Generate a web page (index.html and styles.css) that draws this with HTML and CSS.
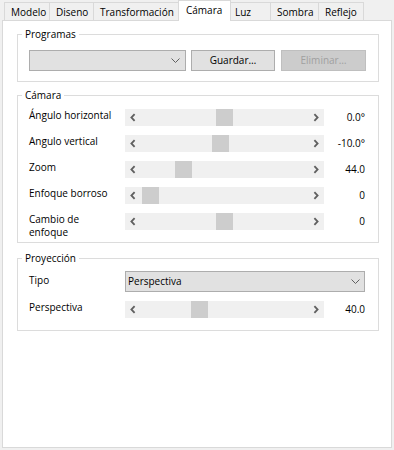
FILE: index.html
```html
<!DOCTYPE html>
<html lang="es">
<head>
<meta charset="utf-8">
<title>Cámara</title>
<link rel="stylesheet" href="styles.css">
</head>
<body>
<div class="window">
  <div class="tabs">
    <div class="tab t-modelo">Modelo</div>
    <div class="tab t-diseno">Diseno</div>
    <div class="tab t-transf">Transformación</div>
    <div class="tab t-camara selected">Cámara</div>
    <div class="tab t-luz">Luz</div>
    <div class="tab t-sombra">Sombra</div>
    <div class="tab t-reflejo">Reflejo</div>
  </div>
  <div class="pane">
    <div class="group g-prog">
      <span class="legend">Programas</span>
      <div class="prog-row">
        <div class="combo c-prog">
          <span class="combo-text"></span>
          <svg class="chev" width="9" height="5" viewBox="0 0 9 5"><polyline points="0.5,0.5 4.5,4.5 8.5,0.5" fill="none" stroke="#606060" stroke-width="1"/></svg>
        </div>
        <div class="btn b-guardar">Guardar…</div>
        <div class="btn b-eliminar disabled">Eliminar…</div>
      </div>
    </div>

    <div class="group g-cam">
      <span class="legend">Cámara</span>
      <div class="grid">
        <div class="lbl">Ángulo horizontal</div>
        <div class="sb">
          <svg class="arr" width="17" height="17" viewBox="0 0 17 17"><polyline points="9.6,5.2 6.4,8.5 9.6,11.8" fill="none" stroke="#606060" stroke-width="1.8"/></svg>
          <div class="track"><div class="thumb" style="margin-left:74px"></div></div>
          <svg class="arr" width="17" height="17" viewBox="0 0 17 17"><polyline points="7.4,5.2 10.6,8.5 7.4,11.8" fill="none" stroke="#606060" stroke-width="1.8"/></svg>
        </div>
        <div class="val">0.0°</div>

        <div class="lbl">Angulo vertical</div>
        <div class="sb">
          <svg class="arr" width="17" height="17" viewBox="0 0 17 17"><polyline points="9.6,5.2 6.4,8.5 9.6,11.8" fill="none" stroke="#606060" stroke-width="1.8"/></svg>
          <div class="track"><div class="thumb" style="margin-left:70px"></div></div>
          <svg class="arr" width="17" height="17" viewBox="0 0 17 17"><polyline points="7.4,5.2 10.6,8.5 7.4,11.8" fill="none" stroke="#606060" stroke-width="1.8"/></svg>
        </div>
        <div class="val">-10.0°</div>

        <div class="lbl">Zoom</div>
        <div class="sb">
          <svg class="arr" width="17" height="17" viewBox="0 0 17 17"><polyline points="9.6,5.2 6.4,8.5 9.6,11.8" fill="none" stroke="#606060" stroke-width="1.8"/></svg>
          <div class="track"><div class="thumb" style="margin-left:33px"></div></div>
          <svg class="arr" width="17" height="17" viewBox="0 0 17 17"><polyline points="7.4,5.2 10.6,8.5 7.4,11.8" fill="none" stroke="#606060" stroke-width="1.8"/></svg>
        </div>
        <div class="val">44.0</div>

        <div class="lbl">Enfoque borroso</div>
        <div class="sb">
          <svg class="arr" width="17" height="17" viewBox="0 0 17 17"><polyline points="9.6,5.2 6.4,8.5 9.6,11.8" fill="none" stroke="#606060" stroke-width="1.8"/></svg>
          <div class="track"><div class="thumb" style="margin-left:0px"></div></div>
          <svg class="arr" width="17" height="17" viewBox="0 0 17 17"><polyline points="7.4,5.2 10.6,8.5 7.4,11.8" fill="none" stroke="#606060" stroke-width="1.8"/></svg>
        </div>
        <div class="val">0</div>

        <div class="lbl">Cambio de<br>enfoque</div>
        <div class="sb">
          <svg class="arr" width="17" height="17" viewBox="0 0 17 17"><polyline points="9.6,5.2 6.4,8.5 9.6,11.8" fill="none" stroke="#606060" stroke-width="1.8"/></svg>
          <div class="track"><div class="thumb" style="margin-left:74px"></div></div>
          <svg class="arr" width="17" height="17" viewBox="0 0 17 17"><polyline points="7.4,5.2 10.6,8.5 7.4,11.8" fill="none" stroke="#606060" stroke-width="1.8"/></svg>
        </div>
        <div class="val">0</div>
      </div>
    </div>

    <div class="group g-proj">
      <span class="legend">Proyección</span>
      <div class="grid grid-proj">
        <div class="lbl lbl-tipo">Tipo</div>
        <div class="combo c-tipo">
          <span class="combo-text">Perspectiva</span>
          <svg class="chev" width="9" height="5" viewBox="0 0 9 5"><polyline points="0.5,0.5 4.5,4.5 8.5,0.5" fill="none" stroke="#606060" stroke-width="1"/></svg>
        </div>

        <div class="lbl">Perspectiva</div>
        <div class="sb">
          <svg class="arr" width="17" height="17" viewBox="0 0 17 17"><polyline points="9.6,5.2 6.4,8.5 9.6,11.8" fill="none" stroke="#606060" stroke-width="1.8"/></svg>
          <div class="track"><div class="thumb" style="margin-left:49px"></div></div>
          <svg class="arr" width="17" height="17" viewBox="0 0 17 17"><polyline points="7.4,5.2 10.6,8.5 7.4,11.8" fill="none" stroke="#606060" stroke-width="1.8"/></svg>
        </div>
        <div class="val">40.0</div>
      </div>
    </div>
  </div>
</div>
</body>
</html>
```
FILE: styles.css
```css
* { box-sizing: border-box; }

html, body {
  margin: 0;
  padding: 0;
  background: #f0f0f0;
}

body {
  font-family: "Open Sans", "Noto Sans", sans-serif;
  font-size: 10px;
  color: #000;
}

.window {
  width: 394px;
  height: 450px;
  display: flex;
  flex-direction: column;
}

/* Tabs */
.tabs {
  height: 20px;
  display: flex;
  align-items: flex-end;
  padding-left: 4px;
}

.tab {
  height: 18px;
  border: 1px solid #d9d9d9;
  border-bottom: none;
  background: #f0f0f0;
  line-height: 16px;
  padding-top: 1px;
  padding-left: 6px;
  white-space: nowrap;
  margin-left: -1px;
}

.tab:first-child { margin-left: 0; }

.tab.selected {
  height: 21px;
  margin-bottom: -1px;
  background: #fff;
  position: relative;
  z-index: 1;
  padding-left: 7px;
}

.t-modelo { width: 46px; }
.t-diseno { width: 45px; }
.t-transf { width: 86px; }
.t-camara { width: 53px; }
.t-luz { width: 41px; padding-left: 4px; }
.t-sombra { width: 49px; }
.t-reflejo { width: 46px; }

/* Pane */
.pane {
  flex: 1;
  margin: 0 2px 2px 2px;
  border: 1px solid #d9d9d9;
  background: #fff;
  display: flex;
  flex-direction: column;
}

.group {
  position: relative;
  border: 1px solid #dcdcdc;
  margin-left: 14px;
  margin-right: 12px;
  padding-left: 11px;
  padding-right: 12px;
}

.legend {
  position: absolute;
  top: -8px;
  left: 4px;
  line-height: 15px;
  padding: 0 3px;
  background: #fff;
  white-space: nowrap;
}

.g-prog {
  margin-top: 13px;
  padding-top: 15px;
  padding-bottom: 10px;
}

.g-cam {
  margin-top: 13px;
  padding-top: 13px;
  padding-bottom: 12px;
}

.g-proj {
  margin-top: 15px;
  padding-top: 12px;
  padding-bottom: 12px;
}

/* Programas row */
.prog-row {
  display: flex;
  align-items: flex-start;
}

.combo {
  height: 21px;
  border: 1px solid #adadad;
  background: #e1e1e1;
  display: flex;
  align-items: center;
  justify-content: space-between;
  padding-left: 2px;
  padding-right: 5px;
}

.combo-text {
  line-height: 19px;
  white-space: nowrap;
}

.chev { display: block; }

.c-prog { width: 157px; }

.btn {
  height: 21px;
  border: 1px solid #adadad;
  background: #e1e1e1;
  text-align: center;
  line-height: 19px;
  white-space: nowrap;
}

.b-guardar { width: 84px; margin-left: 5px; }
.b-eliminar { width: 85px; margin-left: 6px; }

.btn.disabled {
  background: #cccccc;
  border-color: #bfbfbf;
  color: #a0a0a0;
}

/* Grid rows */
.grid {
  display: grid;
  grid-template-columns: 96px 199px 41px;
  grid-auto-rows: 17px;
  row-gap: 9px;
}

.grid-proj {
  grid-template-rows: 21px 17px;
}

.lbl {
  line-height: 13px;
  white-space: nowrap;
}

.lbl-tipo { padding-top: 3px; }

.c-tipo {
  grid-column: 2 / 4;
  padding-right: 4px;
}

.sb {
  display: flex;
  height: 17px;
  background: #f0f0f0;
}

.arr {
  display: block;
  flex: none;
}

.track {
  flex: 1;
  display: flex;
}

.thumb {
  width: 17px;
  height: 17px;
  background: #cdcdcd;
}

.val {
  text-align: right;
  line-height: 16px;
  white-space: nowrap;
}
```
